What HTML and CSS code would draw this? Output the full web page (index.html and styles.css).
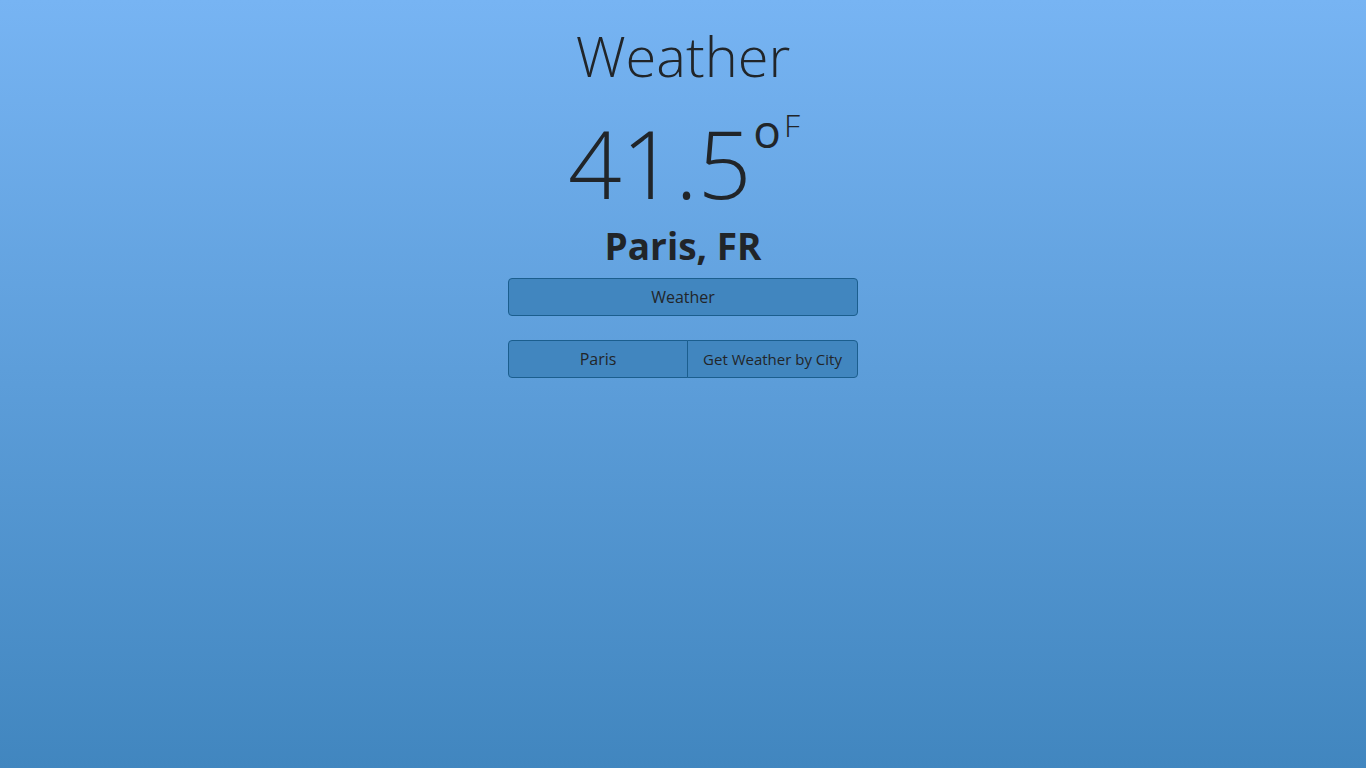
FILE: index.html
```html
<!DOCTYPE html>
<html lang="en">
<head>
<meta charset="utf-8">
<title>Weather</title>
<link rel="stylesheet" href="styles.css">
</head>
<body>
<main class="app">
  <h1 class="title">Weather</h1>
  <div class="temp"><span class="temp-value">41.5</span><span class="deg">o</span><span class="unit">F</span></div>
  <h2 class="city">Paris, FR</h2>
  <button class="btn btn-full" type="button">Weather</button>
  <form class="city-form">
    <input class="city-input" type="text" value="Paris">
    <button class="btn btn-side" type="button">Get Weather by City</button>
  </form>
</main>
</body>
</html>
```
FILE: styles.css
```css
html, body {
  margin: 0;
  height: 100%;
}
body {
  background: linear-gradient(to bottom, #77b4f3 0%, #4186bf 100%);
  font-family: "Open Sans", "Noto Sans", sans-serif;
  color: #212529;
}
.app {
  display: flex;
  flex-direction: column;
  align-items: center;
  padding-top: 22px;
}
.title {
  margin: 0;
  font-size: 56px;
  font-weight: 300;
  line-height: 1.2;
}
.temp {
  display: flex;
  align-items: flex-start;
  line-height: 1;
  margin-top: 27px;
  margin-left: 2px;
}
.temp-value {
  font-size: 94px;
  font-weight: 300;
}
.deg {
  font-size: 46px;
  font-weight: 400;
  line-height: 1;
  margin-top: -9px;
  margin-left: 2px;
}
.unit {
  font-size: 32px;
  font-weight: 300;
  line-height: 1;
  margin-top: -7px;
  margin-left: 3px;
}
.city {
  margin: 14px 0 0;
  font-size: 37px;
  font-weight: 700;
  line-height: 1.2;
}
.btn, .city-input {
  font-family: inherit;
  font-size: 16px;
  color: #212529;
  background: #4186bf;
  border: 1px solid #1b5e8e;
  height: 38px;
  box-sizing: border-box;
  padding: 0 12px;
  white-space: nowrap;
}
.btn-full {
  width: 350px;
  border-radius: 4px;
  margin-top: 9px;
}
.city-form {
  display: flex;
  width: 350px;
  margin: 24px 0 0;
}
.city-input {
  width: 180px;
  text-align: center;
  border-radius: 4px 0 0 4px;
  outline: none;
}
.btn-side {
  flex: 1;
  padding: 0 6px;
  font-size: 15px;
  border-left: 1px solid #1b5e8e;
  margin-left: -1px;
  border-radius: 0 4px 4px 0;
}
```
